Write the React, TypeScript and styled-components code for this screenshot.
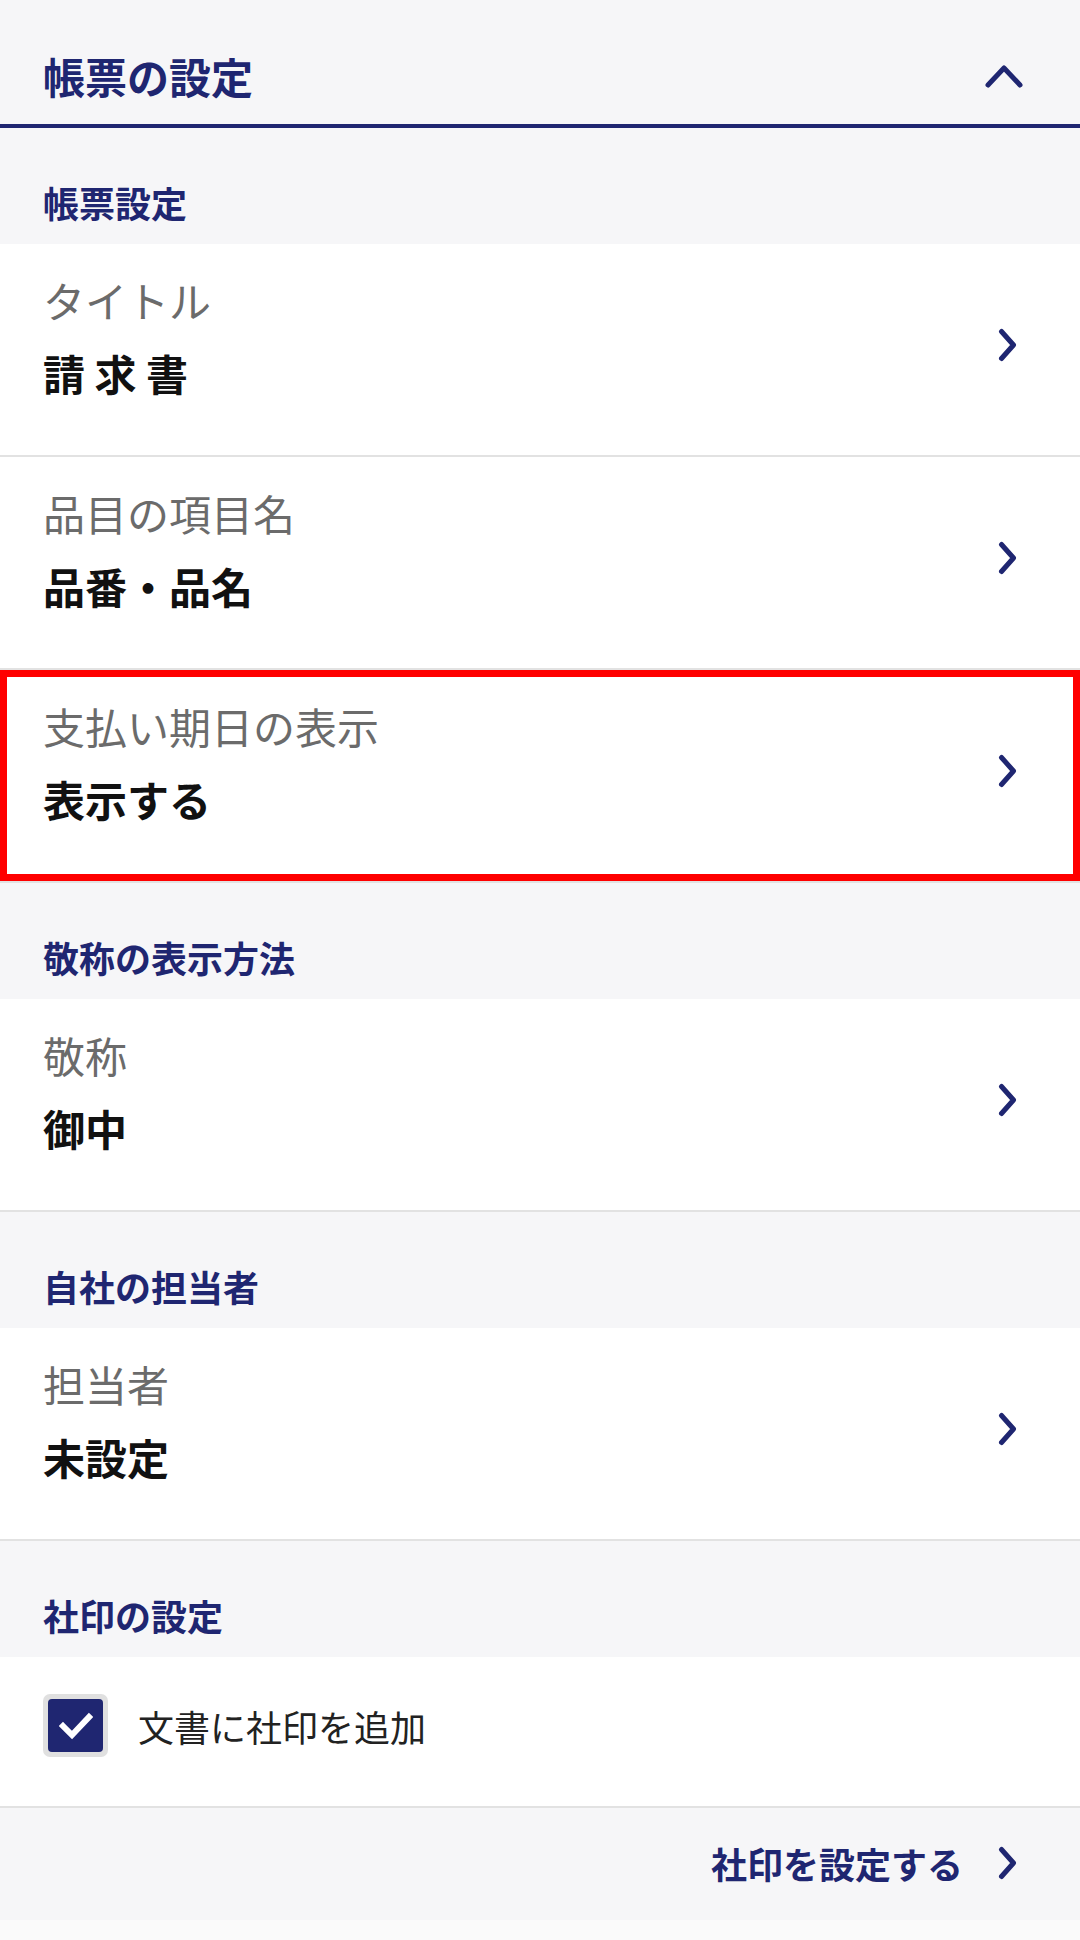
import React from 'react';
import styled, { createGlobalStyle, css } from 'styled-components';

const navy = '#1f2671';

const GlobalStyle = createGlobalStyle`
  html, body {
    margin: 0;
    padding: 0;
    background: #fafafa;
  }
  body {
    font-family: "Noto Sans CJK JP", "Noto Sans", sans-serif;
    -webkit-font-smoothing: antialiased;
  }
`;

const Page = styled.div`
  width: 1080px;
  background: #f6f6f8;
`;

const Header = styled.header`
  box-sizing: border-box;
  height: 128px;
  padding: 28px 57px 0 43px;
  display: flex;
  align-items: center;
  justify-content: space-between;
  border-bottom: 4px solid ${navy};
`;

const HeaderTitle = styled.h1`
  margin: 0;
  font-size: 42px;
  font-weight: 700;
  line-height: 60px;
  color: ${navy};
`;

const SectionTitle = styled.h2`
  margin: 0;
  box-sizing: border-box;
  height: 116px;
  padding: 52px 43px 0;
  font-size: 36px;
  line-height: 44px;
  font-weight: 700;
  color: ${navy};
`;

const Row = styled.div<{ $highlighted?: boolean }>`
  box-sizing: border-box;
  height: 213px;
  padding: 0 62px 0 43px;
  display: flex;
  align-items: center;
  justify-content: space-between;
  background: #fff;
  border-bottom: 2px solid #e2e2e2;
  ${(p) =>
    p.$highlighted &&
    css`
      box-shadow: inset 0 0 0 7px #ff0000;
    `}
`;

const RowText = styled.div`
  display: flex;
  flex-direction: column;
  gap: 15px;
  margin-top: -26px;
`;

const Label = styled.span`
  font-size: 42px;
  line-height: 58px;
  color: #6b6b6b;
`;

const Value = styled.span`
  font-size: 42px;
  line-height: 58px;
  font-weight: 700;
  color: #111;
`;

const Arrow = styled.span`
  display: flex;
  margin-bottom: 10px;
`;

const CheckRow = styled.label`
  box-sizing: border-box;
  height: 151px;
  padding: 0 43px 12px;
  display: flex;
  align-items: center;
  gap: 30px;
  background: #fff;
  border-bottom: 2px solid #e2e2e2;
`;

const CheckBox = styled.span`
  box-sizing: border-box;
  width: 65px;
  height: 63px;
  padding: 5px;
  border-radius: 7px;
  background: #e0e0e0;
  display: flex;
`;

const CheckInner = styled.span`
  flex: 1;
  border-radius: 4px;
  background: ${navy};
  display: flex;
  align-items: center;
  justify-content: center;
`;

const CheckText = styled.span`
  font-size: 36px;
  line-height: 48px;
  color: #222;
`;

const LinkRow = styled.div`
  box-sizing: border-box;
  height: 112px;
  padding: 0 62px 2px 0;
  display: flex;
  align-items: center;
  justify-content: flex-end;
  gap: 35px;
`;

const LinkText = styled.span`
  font-size: 36px;
  line-height: 48px;
  font-weight: 700;
  color: ${navy};
`;

const Tail = styled.div`
  height: 22px;
  background: #fafafa;
`;

const ChevronRight = () => (
  <svg width="20" height="34" viewBox="0 0 20 34">
    <path
      d="M3.5 3.5 L15.5 17 L3.5 30.5"
      fill="none"
      stroke={navy}
      strokeWidth="5"
      strokeLinecap="round"
      strokeLinejoin="round"
    />
  </svg>
);

const ChevronUp = () => (
  <svg width="38" height="24" viewBox="0 0 38 24">
    <path
      d="M3 21 L19 4 L35 21"
      fill="none"
      stroke={navy}
      strokeWidth="5"
      strokeLinecap="round"
      strokeLinejoin="round"
    />
  </svg>
);

const CheckMark = () => (
  <svg width="34" height="28" viewBox="0 0 34 28">
    <path
      d="M4 14 L13 23 L30 5"
      fill="none"
      stroke="#fff"
      strokeWidth="6"
      strokeLinecap="square"
    />
  </svg>
);

type Item = { label: string; value: string; highlighted?: boolean };

const SettingRow = ({ item }: { item: Item }) => (
  <Row $highlighted={item.highlighted}>
    <RowText>
      <Label>{item.label}</Label>
      <Value>{item.value}</Value>
    </RowText>
    <Arrow>
      <ChevronRight />
    </Arrow>
  </Row>
);

const formItems: Item[] = [
  { label: 'タイトル', value: '請 求 書' },
  { label: '品目の項目名', value: '品番・品名' },
  { label: '支払い期日の表示', value: '表示する', highlighted: true },
];

export default function App() {
  return (
    <Page>
      <GlobalStyle />
      <Header>
        <HeaderTitle>帳票の設定</HeaderTitle>
        <ChevronUp />
      </Header>

      <SectionTitle>帳票設定</SectionTitle>
      {formItems.map((item) => (
        <SettingRow key={item.label} item={item} />
      ))}

      <SectionTitle>敬称の表示方法</SectionTitle>
      <SettingRow item={{ label: '敬称', value: '御中' }} />

      <SectionTitle>自社の担当者</SectionTitle>
      <SettingRow item={{ label: '担当者', value: '未設定' }} />

      <SectionTitle>社印の設定</SectionTitle>
      <CheckRow>
        <CheckBox>
          <CheckInner>
            <CheckMark />
          </CheckInner>
        </CheckBox>
        <CheckText>文書に社印を追加</CheckText>
      </CheckRow>
      <LinkRow>
        <LinkText>社印を設定する</LinkText>
        <ChevronRight />
      </LinkRow>
      <Tail />
    </Page>
  );
}
